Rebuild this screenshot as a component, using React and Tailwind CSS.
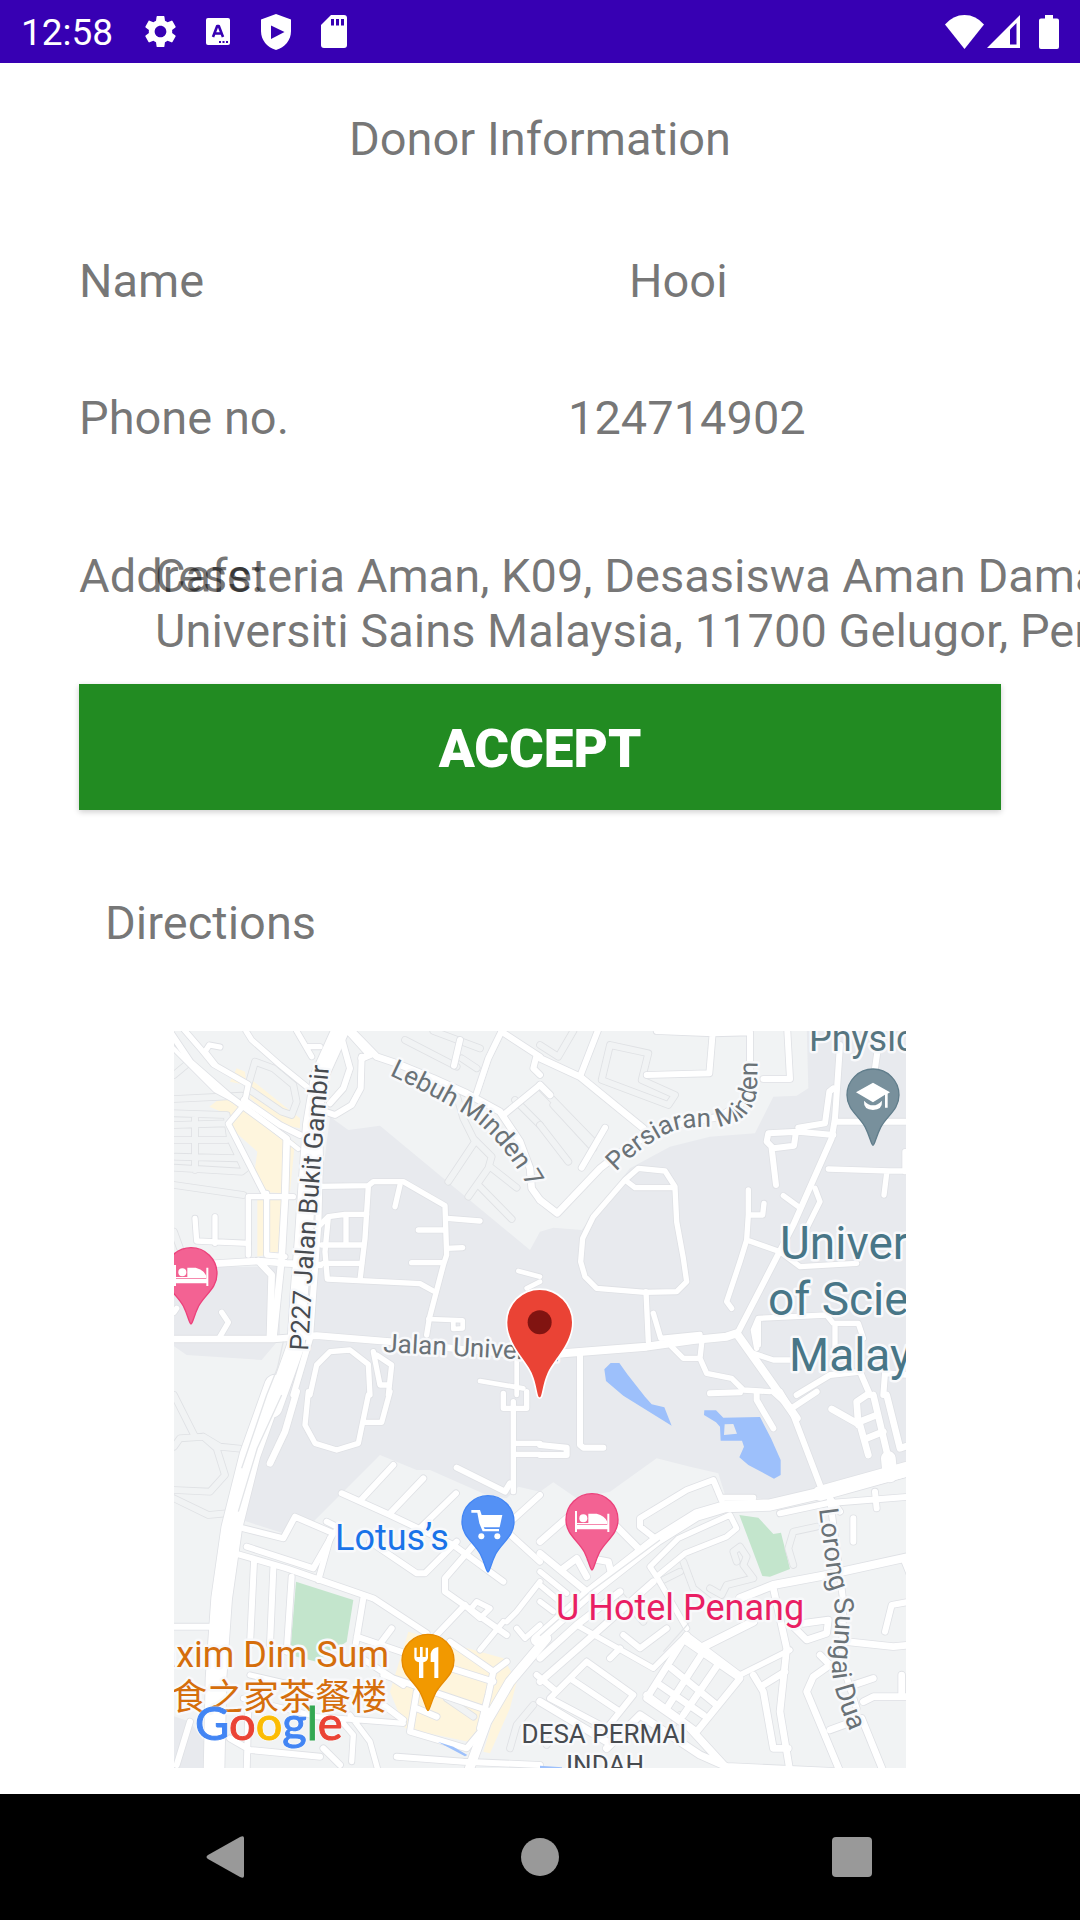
import React from "react";

/* Map geometry. The map is drawn on a fine grid of three units per pixel,
   split in four quadrants; each road is [width, path]. */
const quadrants = [
  {
    at: "translate(0 0)",
    roads: [
      [13, "M0 60L60 120L135 195L222 242L385 372"],
      [18, "M0 20L62 112L180 215L350 340"],
      [16, "M30 0L95 75L130 118L235 178L222 240L175 296L282 505"],
      [16, "M105 80L118 60L150 66M105 80L135 118"],
      [16, "M228 18L245 45L330 120L410 185"],
      [18, "M222 225L330 300L390 330"],
      [16, "M380 18L425 95M410 65H450"],
      [18, "M515 40L540 130L520 190L480 235"],
      [18, "M575 95L572 190L545 240L495 270L450 255"],
      [20, "M535 18L600 90L575 100M545 18L620 95L680 115L790 160L890 205L990 260L1050 350L1080 430L1085 490L1110 525"],
      [18, "M870 45L852 122"],
      [18, "M995 18L955 100L920 205"],
      [18, "M995 20L1110 95M1110 150L1090 130L1100 90M1110 180L1000 270"],
      [20, "M350 345L345 520L335 700L310 940"],
      [16, "M235 690V515H370M290 505V690L345 695"],
      [16, "M75 580L80 648L235 655M135 575V655"],
      [20, "M100 718L265 708L350 715L450 720M265 708L305 750L300 930"],
      [20, "M12 942H310L440 932L660 950L800 965L1000 985L1110 990"],
      [16, "M450 484L595 482L610 470H700L825 542L830 690L820 720L778 880L770 930"],
      [16, "M595 485L585 640L570 765M690 480L675 545M832 580L930 588M745 615H825M830 670L878 668M725 713H820"],
      [16, "M450 600L475 575L525 568H590M528 570V660M455 660H580M460 715H575M475 575L465 680L472 762L750 776L790 798"],
      [14, "M775 882L878 886V910L850 912V888"],
      [16, "M155 862L175 892L150 935M12 862L20 850"],
      [16, "M420 1110L440 1020L480 980L540 975L595 1018L600 1110M610 980L630 1080H655M620 990L665 1020L655 1110"],
      [14, "M1045 738L1110 755M1070 790L1110 770M930 1068L1060 1090M1040 1000V1110"],
      [52, "M510 18L450 150L425 300L410 500L400 650L388 800L378 960L310 1150"],
      [18, "M445 200L450 400L445 600L430 800L420 940L370 1110"],
    ],
    minor: [
      "M12 222L215 212M12 265L170 270M15 300L170 295M15 345H170M15 395L205 400M75 280V435M12 428L215 440L228 430M12 480L220 510M170 270L180 340L220 425",
      "M235 180L255 110L310 130L370 180L380 230L365 270L335 260L240 195",
      "M705 45L860 125M790 18L930 70M875 100L920 130M860 210L880 280L915 350L835 470M915 345L965 395L955 430L895 515M960 425L1040 488M925 480L1025 582M1035 225L1110 300",
      "M12 620L30 670M12 150L60 110",
    ],
  },
  {
    at: "translate(1110 0)",
    roads: [
      [20, "M0 100L120 155L310 310"],
      [18, "M180 0L120 155M350 18L520 25L630 22V210M518 25L508 145L320 150M670 162H750L742 18"],
      [20, "M0 525L52 565L180 430L270 360L400 300L540 275L610 230L632 150M0 180L30 210"],
      [18, "M195 308L125 428M1015 60L1005 130M900 60L885 280L875 340L760 600L590 930"],
      [18, "M880 190L868 200L855 295L775 308M890 290H1110M880 330L775 320L685 325L680 350L700 370L762 362L768 320M695 370L708 480"],
      [16, "M865 432L1050 438H1110M1040 445L1032 510M1095 380V440"],
      [16, "M255 465L295 430L375 438L405 485V490M255 465L285 488H405L410 590L430 700L440 770L410 800L315 802L170 790L135 755L122 710L128 640L160 575L255 465"],
      [16, "M625 495V570L620 645L600 710L560 830L575 850M672 535L668 570H630M730 512L775 545M825 490L840 530L800 610M620 645L720 680L780 725L950 715"],
      [16, "M318 800L325 950M340 865L362 940L480 928"],
      [24, "M0 995L70 985L320 965L460 945L560 935L590 925L700 1080L770 1180"],
      [16, "M395 965L430 1000H480L485 955M480 1000L500 1045L575 1060L610 1095L690 1100M640 985L700 1005H770M650 970L640 915L655 880L860 870L880 895H955L970 940M885 900V980M655 880V960"],
      [18, "M120 990V1110M770 1110L870 1050L960 1040L990 1110M1110 1050L1035 1045L1030 1110"],
    ],
    minor: [
      "M0 60L55 95L100 18M210 60L185 165L385 240L405 210L305 165L325 85L210 60",
      "M0 185L160 350M40 240L160 370M0 300L85 410",
    ],
  },
  {
    at: "translate(0 1110)",
    roads: [
      [20, "M380 -10L345 110L300 205"],
      [62, "M315 -30L240 180L185 400L155 610L138 850L132 1130"],
      [16, "M415 -10L405 90L435 145L500 165L565 145L595 0M585 82H635L660 -10"],
      [18, "M220 400L340 430L375 365L490 415L430 520L230 455M490 415L510 400L470 380"],
      [18, "M195 475L350 520L610 610L770 715M480 430L445 555"],
      [18, "M252 500L240 750M310 520L300 750M365 545L350 770"],
      [18, "M515 295L660 360L850 450L1000 560M670 210L570 318M760 250L660 355M858 295L750 400"],
      [18, "M600 440L740 535H765L860 440M920 440L825 550V590L1010 720M885 630L790 730M860 218L1005 290L1020 265M1110 300L1000 400L1110 500"],
      [16, "M1000 -5V40H1070V-10M1030 20V290M1035 145H1110M1110 178H1040"],
      [16, "M1000 680L930 765M920 620L900 645L930 670L960 640ZM1010 680L1040 650L1110 560M1040 700L1065 730L1110 690"],
      [18, "M580 610L555 760M560 725L780 800L970 860M665 700L620 760M560 780L700 870M640 840L950 945M600 900L700 975"],
      [28, "M1130 730L1020 860L950 980L895 1130"],
      [18, "M840 740L970 830L1010 800M970 830L955 900L930 1000M740 890L720 1010L890 1060L940 1000M740 940L800 965"],
      [16, "M240 840L500 900M220 910L440 965L700 985M520 985L550 1020L545 1100M540 960L600 1040L625 1130"],
      [18, "M12 695H130M180 1030L240 1065L450 1085M235 940L230 1130M680 1085L880 1100L1110 1110M460 1060L510 1110M60 980L20 1110"],
    ],
    minor: [
      "M12 155L30 130L100 125L140 160L165 240L120 290L12 285M75 125L12 0M100 125L150 155L220 162M12 310L115 360L170 355",
      "M1020 1060L1040 990L1090 930M830 910L910 965",
    ],
  },
  {
    at: "translate(1110 1110)",
    roads: [
      [34, "M-10 735L140 600L350 435L470 360L555 335L690 330L860 290L1110 225"],
      [44, "M840 295L1110 220M1045 190L1050 240"],
      [18, "M120 -10V150L130 158H190M0 150L80 158V180H0M510 -5L600 -8M650 -10V15L700 100M720 -10L760 60L840 270M700 -10L755 40L830 -10"],
      [20, "M875 42L960 90L985 180M955 90L950 20L980 0M1000 0L1045 190M960 80L1010 60M980 130L1030 110M1040 0L1080 160L1110 150"],
      [18, "M545 315L520 255L440 285L300 370V395L345 430M545 308H640"],
      [16, "M350 545L330 515L415 430L570 360L590 400L560 425L435 475L350 545L440 700"],
      [18, "M720 355L860 325L1110 305M1005 290L1010 340M940 370V440M870 310L900 350"],
      [24, "M480 760L640 680M600 610L700 570L860 540L1110 485"],
      [20, "M0 860L160 720L340 560M0 790L110 690L240 590M0 440L80 370M230 395L300 465M0 475L140 590M70 520L110 490L140 545M150 490L205 500L215 540"],
      [16, "M0 530L80 595M0 570L60 620M0 620L40 650M110 690L340 820L440 720L600 840L750 765"],
      [18, "M250 720L300 760L380 700M210 790L240 760M140 800L280 900L200 1000L30 910L140 800M90 850L240 950M-10 840L50 890"],
      [20, "M440 720L320 910L450 1000M440 740L600 850L470 1010L320 900M395 820L530 930M360 870L490 960M490 770L380 940M540 800L430 960"],
      [22, "M450 1000L560 1120M200 1060L300 960L480 1080L560 1115L880 1130M0 920L200 1040"],
      [20, "M700 580L740 760L720 950L750 1130M640 840L670 890L700 1060H745M670 870L735 830M760 695L800 735L860 715L865 675L790 685"],
      [20, "M840 780L870 810L820 845L800 890L900 1130M870 1005L965 970L1030 1130M920 740L1060 755L1110 750M940 870L1000 850M970 920L1000 905H1110M1085 840V900"],
      [18, "M1035 710L1055 630L1110 620M1090 490L1110 540M870 310L885 430L910 620L905 800L950 940"],
    ],
    minor: [
      "M590 500L580 470L600 455L620 485L610 510L640 550L560 570L545 600L510 580M760 510L745 460L760 410L830 395",
      "M430 500L460 580L510 620M360 560L420 530M240 600L310 680M390 1000L420 960M20 1050L60 1000",
    ],
  },
];

const PIN =
  "M0 151C-5 151-8 127-23 97C-43 61-78 44-78 0A78 78 0 1 1 78 0C78 44 43 61 23 97C8 127 5 151 0 151Z";

function Pin({ x, y, fill, edge, children }) {
  return (
    <g transform={`translate(${x} ${y})`}>
      <path d={PIN} fill={fill} stroke={edge} strokeWidth="4" />
      {children}
    </g>
  );
}

function Bed() {
  return (
    <g fill="#fff">
      <path d="M-51 -26H-45V15H46V-18H52V37H46V29H-45V37H-51Z" />
      <circle cx="-26" cy="-4" r="12" />
      <path d="M-11 -18H14Q38 -12 46 6V13H-45V10H-11Z" />
    </g>
  );
}

function MapView() {
  const halo = {
    paintOrder: "stroke",
    stroke: "#f8f9fb",
    strokeWidth: 5,
    strokeLinejoin: "round",
    fontFamily: "Roboto, 'Noto Sans CJK SC', sans-serif",
  };
  return (
    <svg
      viewBox="4 6 732 737"
      className="block h-auto w-full overflow-hidden"
      role="img"
      aria-label="Map around Universiti Sains Malaysia"
    >
      <defs>
        <path id="lebuh" d="M219 50Q270 74 299 92Q330 112 362 168" />
        <path id="gambir" d="M138 326L143 240L150 145L160 28" />
        <path id="persiaran" d="M446 147Q472 120 503 106Q520 101 545 102Q585 98 587 62L588 20" />
        <path id="lorong" d="M649 484L658 556Q667 580 665 600L662 645Q664 675 692 732" />
      </defs>
      <g transform="scale(0.33333)">
        <rect x="0" y="0" width="2220" height="2250" fill="#f1f3f4" />
        <path
          fill="#e8eaee"
          d="M480 275L535 315L630 302L1080 675L1110 620L1150 608L1235 615L1380 430L1500 365L1620 335L1755 325L1810 215L1880 212L1915 190L1910 0H2220V1325L1950 1390L1800 1425L1665 1410L1645 1345L1560 1325L1460 1300L1320 1400L1220 1420L1150 1372L1110 1400L1045 1385L1010 1420L950 1410L780 1335H740L630 1290L430 1490L370 1465L340 1525L200 1480L300 1200L400 900ZM0 725H330V940L275 1005L50 990L0 955ZM0 2070L60 2090L110 2160V2250H0Z"
        />
        <g fill="#fef5dd">
          <path d="M118 245L140 228L200 220L345 350L335 505L275 500L255 430L262 380L195 320L178 285L165 265ZM262 525H335L325 680L262 695ZM200 130L225 140L230 180L180 170ZM245 165L370 265L390 280V310L340 300L240 220ZM375 350L360 500L350 490V345Z" />
          <path d="M715 1820L1000 1900L1040 1970L1020 2050L960 2185L940 2180L980 2050L895 2150L705 2110L660 2000Z" />
        </g>
        <g fill="#c3e5cc">
          <path d="M378 1670L550 1725L530 1850L440 1910L360 1890Z" />
          <path d="M1708 1470L1765 1478L1810 1527L1833 1523L1860 1632L1800 1655L1777 1653Z" />
        </g>
        {quadrants.map((q) => (
          <g key={q.at} transform={q.at} fill="none" strokeLinecap="round" strokeLinejoin="round">
            {q.minor.map((d) => (
              <g key={d}>
                <path d={d} stroke="#dfe1e4" strokeWidth="23" />
                <path d={d} stroke="#f1f3f4" strokeWidth="18" />
              </g>
            ))}
          </g>
        ))}
        {quadrants.map((q) => (
          <g key={q.at} transform={q.at} fill="none" stroke="#dfe1e5" strokeLinecap="round" strokeLinejoin="round">
            {q.roads.map(([w, d]) => (
              <path key={d} d={d} strokeWidth={w + 5} />
            ))}
          </g>
        ))}
        {quadrants.map((q) => (
          <g key={q.at} transform={q.at} fill="none" stroke="#fff" strokeLinecap="round" strokeLinejoin="round">
            {q.roads.map(([w, d]) => (
              <path key={d} d={d} strokeWidth={w} />
            ))}
          </g>
        ))}
        <path
          d="M335 1110L262 1270L205 1460M1110 1832L1260 1700L1470 1545M1480 1880L1560 1790M340 950L322 1030L290 1110L215 1330"
          fill="none"
          stroke="#e3e5e8"
          strokeWidth="4"
        />
        <g fill="#9dc0fb">
          <path d="M1303 1033L1322 1014H1348L1372 1048L1425 1115L1445 1138L1483 1147L1505 1202L1360 1112L1308 1068Z" />
          <path
            fillRule="evenodd"
            d="M1603 1156H1638L1660 1178L1770 1176L1803 1240L1832 1305V1350L1812 1361L1735 1320L1708 1297L1722 1265L1716 1247H1652L1650 1205L1638 1192L1602 1170ZM1664 1198L1690 1197L1701 1226L1662 1230Z"
          />
          <path d="M803 2150L850 2165L892 2190L885 2194ZM1110 2222L1176 2227V2230H1110Z" />
        </g>
      </g>

      <g {...halo} fontSize="26">
        <g fill="#6a7277">
          <text><textPath href="#lebuh">Lebuh Minden 7</textPath></text>
          <text><textPath href="#persiaran">Persiaran Minden</textPath></text>
          <text fontSize="27"><textPath href="#lorong">Lorong Sungai Dua</textPath></text>
          <text x="213" y="327" transform="rotate(3 213 327)">Jalan Universiti</text>
        </g>
        <g fill="#474b50">
          <text><textPath href="#gambir">P227 Jalan Bukit Gambir</textPath></text>
          <text x="434" y="718" textAnchor="middle">DESA PERMAI</text>
          <text x="435" y="749" textAnchor="middle">INDAH</text>
        </g>
      </g>
      <g {...halo} fontSize="46" fill="#487687">
        <text x="610" y="234">University</text>
        <text x="598" y="290">of Science</text>
        <text x="619" y="346">Malaysia</text>
      </g>
      <g {...halo} fontSize="36">
        <text x="639" y="26" fill="#567580">Physics</text>
        <text x="165" y="525" fill="#1a73e8">Lotus’s</text>
        <text x="386" y="595" fill="#e91e63">U Hotel Penang</text>
        <g fill="#d56e0c">
          <text x="219" y="642" textAnchor="end">Maxim Dim Sum</text>
          <text x="217" y="685" textAnchor="end">食之家茶餐楼</text>
        </g>
      </g>

      <g transform="scale(0.33333)">
        <Pin x="63" y="746" fill="#f36293" edge="#ec407a"><Bed /></Pin>
        <Pin x="1266" y="1484" fill="#f36293" edge="#ec407a"><Bed /></Pin>
        <Pin x="2109" y="210" fill="#78909c" edge="#607d8b">
          <path fill="#fff" d="M-51 -8L0 -37L51 -8L44 -4V38H36V-1L0 22ZM-27 17Q-14 31 0 31Q14 31 27 17Q29 44 0 45Q-29 44 -27 17Z" />
        </Pin>
        <Pin x="954" y="1490" fill="#5491f5" edge="#4285f4">
          <path fill="#fff" d="M-50 -35H-24L-19 -20H43L35 17H-13L-10 22H33V29H-16L-26 5L-32 -27H-50Z" />
          <circle cx="-20" cy="44" r="9" fill="#fff" />
          <circle cx="28" cy="44" r="9" fill="#fff" />
        </Pin>
        <Pin x="774" y="1906" fill="#f29900" edge="#e68a00">
          <path fill="#fff" d="M-41 -38H-34V-10H-24V-40H-16V-10H-7V-38H0V-7Q-3 4 -14 6V53H-27V6Q-39 4 -41 -7ZM8 5V-20Q12 -38 31 -40V53H19V5Z" />
        </Pin>
        <path
          d="M1109 1117C1101 1117 1102 1082 1085 1043C1064 1000 1012 956 1012 892A97 97 0 1 1 1206 892C1206 956 1154 1000 1133 1043C1116 1082 1117 1117 1109 1117Z"
          fill="#ea4335"
          stroke="#fff"
          strokeWidth="10"
          paintOrder="stroke"
        />
        <circle cx="1109" cy="892" r="36" fill="#811411" />
      </g>

      <text
        x="25"
        y="715"
        fontSize="47"
        strokeWidth="1"
        className="font-['Lato',sans-serif] drop-shadow-[0_0_1px_white]"
      >
        <tspan fill="#4285f4" stroke="#4285f4">G</tspan>
        <tspan fill="#ea4335" stroke="#ea4335">o</tspan>
        <tspan fill="#fbbc04" stroke="#fbbc04">o</tspan>
        <tspan fill="#4285f4" stroke="#4285f4">g</tspan>
        <tspan fill="#34a853" stroke="#34a853">l</tspan>
        <tspan fill="#ea4335" stroke="#ea4335">e</tspan>
      </text>
    </svg>
  );
}

function StatusBar() {
  return (
    <header className="flex h-[63px] items-center justify-between bg-[#3700b3] pr-[21px] pl-[21px] text-white">
      <div className="flex items-center">
        <time className="pt-0.5 text-[37px] leading-[44px]">12:58</time>
        <svg className="ml-7" width="39" height="39" viewBox="0 0 24 24" fill="currentColor" aria-hidden="true">
          <path d="M19.14 12.94c.04-.3.06-.61.06-.94 0-.32-.02-.64-.07-.94l2.03-1.58a.49.49 0 0 0 .12-.61l-1.92-3.32a.488.488 0 0 0-.59-.22l-2.39.96c-.5-.38-1.03-.7-1.62-.94l-.36-2.54a.484.484 0 0 0-.48-.41h-3.84c-.24 0-.43.17-.47.41l-.36 2.54c-.59.24-1.13.57-1.62.94l-2.39-.96c-.22-.08-.47 0-.59.22L2.74 8.87c-.12.21-.08.47.12.61l2.03 1.58c-.05.3-.09.63-.09.94s.02.64.07.94l-2.03 1.58a.49.49 0 0 0-.12.61l1.92 3.32c.12.22.37.29.59.22l2.39-.96c.5.38 1.03.7 1.62.94l.36 2.54c.05.24.24.41.48.41h3.84c.24 0 .44-.17.47-.41l.36-2.54c.59-.24 1.13-.56 1.62-.94l2.39.96c.22.08.47 0 .59-.22l1.92-3.32c.12-.22.07-.47-.12-.61l-2.01-1.58zM12 15.6c-1.98 0-3.6-1.62-3.6-3.6s1.62-3.6 3.6-3.6 3.6 1.62 3.6 3.6-1.62 3.6-3.6 3.6z" />
        </svg>
        <svg className="ml-[26px]" width="24" height="27" viewBox="0 0 24 27" aria-hidden="true">
          <rect width="24" height="27" rx="2" fill="currentColor" />
          <path d="M7 19L11.2 8H12.8L17 19M8.500 15.500H15.500" fill="none" stroke="#3700b3" strokeWidth="2.600" strokeLinejoin="round" />
          <path d="M13 23h2v2h-2zM16.500 23h2v2h-2zM20 23h2v2h-2z" fill="#3700b3" />
        </svg>
        <svg className="ml-[31px]" width="30" height="36" viewBox="0 0 30 36" aria-hidden="true">
          <path d="M15 0L30 5.500V17C30 26 24 33.500 15 36C6 33.500 0 26 0 17V5.500Z" fill="currentColor" />
          <path d="M10 11.500L23.500 18L10 25Z" fill="#3700b3" />
        </svg>
        <svg className="ml-[30px]" width="26" height="33" viewBox="0 0 26 33" aria-hidden="true">
          <path d="M10 0H23Q26 0 26 3V30Q26 33 23 33H3Q0 33 0 30V10Z" fill="currentColor" />
          <path d="M10 4h3v6.500h-3zM15 4h3v6.500h-3zM20 4h3v6.500h-3z" fill="#3700b3" />
        </svg>
      </div>
      <div className="flex items-center">
        <svg width="39" height="34" viewBox="0 0 39 34" fill="currentColor" aria-hidden="true">
          <path d="M0 9.500Q8 0 19.500 0Q31 0 39 9.500L19.500 34Z" />
        </svg>
        <svg className="ml-[3px]" width="33" height="33" viewBox="0 0 33 33" aria-hidden="true">
          <path d="M33 0V33H0Z" fill="currentColor" />
          <path d="M23 14.500L29.500 8V29.500H23Z" fill="#3700b3" />
        </svg>
        <svg className="ml-[19px]" width="20" height="34" viewBox="0 0 20 34" fill="currentColor" aria-hidden="true">
          <path d="M6 0H14V3.500H18Q20 3.500 20 5.500V32Q20 34 18 34H2Q0 34 0 32V5.500Q0 3.500 2 3.500H6Z" />
        </svg>
      </div>
    </header>
  );
}

function NavBar() {
  return (
    <nav className="grid h-[126px] grid-cols-3 bg-black px-[72px] text-[#999]">
      <button type="button" aria-label="Back" className="flex items-center justify-center pr-1">
        <svg width="40" height="42" viewBox="0 0 40 42" fill="currentColor">
          <path d="M2 19L34 1Q38 -1 38 2V40Q38 43 34 41L2 23Q-1 21 2 19Z" />
        </svg>
      </button>
      <button type="button" aria-label="Home" className="flex items-center justify-center">
        <span className="size-[38px] rounded-full bg-[#999]" />
      </button>
      <button type="button" aria-label="Recent apps" className="flex items-center justify-center">
        <span className="size-10 rounded bg-[#999]" />
      </button>
    </nav>
  );
}

export default function App() {
  return (
    <div className="flex min-h-screen flex-col overflow-hidden bg-white font-['Roboto',sans-serif]">
      <StatusBar />
      <main className="flex-1 pb-[26px] text-[47px] leading-[55px] text-black/54">
        <h1 className="pt-12 text-center">Donor Information</h1>
        <dl className="px-[79px]">
          <div className="mt-[87px] flex">
            <dt className="w-1/2">Name</dt>
            <dd className="ml-[89px]">Hooi</dd>
          </div>
          <div className="mt-[82px] flex">
            <dt className="w-1/2">Phone no.</dt>
            <dd className="ml-7">124714902</dd>
          </div>
          <div className="mt-[103px] grid">
            <dt className="col-start-1 row-start-1">Address:</dt>
            <dd className="col-start-1 row-start-1 ml-[76px] w-0 whitespace-nowrap">
              Cafeteria Aman, K09, Desasiswa Aman Damai,
              <br />
              Universiti Sains Malaysia, 11700 Gelugor, Penang
            </dd>
          </div>
        </dl>
        <div className="mt-[26px] px-[79px]">
          <button
            type="button"
            className="h-[126px] w-full bg-[#228b22] pt-1 text-[53px] leading-[62px] font-black text-white shadow-[0_2px_6px_rgba(0,0,0,0.2)]"
          >
            ACCEPT
          </button>
        </div>
        <h2 className="mt-[85px] pl-[105px]">Directions</h2>
        <div className="mx-auto mt-[81px] w-[732px] max-w-full">
          <MapView />
        </div>
      </main>
      <NavBar />
    </div>
  );
}
